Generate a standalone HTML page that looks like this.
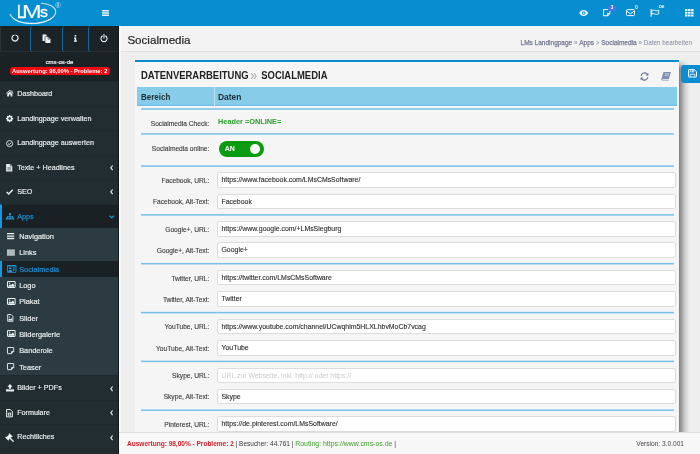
<!DOCTYPE html>
<html lang="de">
<head>
<meta charset="utf-8">
<title>LMs CMS - Socialmedia</title>
<style>
*{box-sizing:border-box;margin:0;padding:0}
html,body{width:700px;height:454px;overflow:hidden}
body{font-family:"Liberation Sans",sans-serif;background:#eeeeee;color:#333;position:relative;font-size:7.2px;line-height:1}
.abs{position:absolute}
svg{display:block;overflow:visible}
#top,#side,#chead,#box,#foot{will-change:transform}

/* ---------- top bar ---------- */
#top{position:absolute;left:0;top:0;width:700px;height:26px;background:#078ed1}
#logo{position:absolute;left:0;top:0;width:119px;height:26px}
#logo .lms{position:absolute;left:0;top:1.5px;font-size:19px;line-height:19px;color:#fff;white-space:nowrap;-webkit-text-stroke:.3px #fff}
#logo .lms span{position:absolute;top:0;transform-origin:0 0;display:block}
#logo .lms .cL{left:17.4px;transform:scaleX(.76);-webkit-text-stroke:.35px #fff}
#logo .lms .cM{left:21.9px;transform:scaleX(1.24);-webkit-text-stroke:.05px #fff}
#logo .lms .cs{left:39.6px;top:3.7px;font-size:14.2px;line-height:14.2px;transform:scaleX(1.12)}
#logo .reg{position:absolute;left:55.2px;top:1.5px;font-size:7.4px;line-height:8px;color:#c9e6f6}
#burger{position:absolute;left:102px;top:10px;width:7px;height:6px}
#burger i{display:block;height:1.5px;background:#e4f2fa;margin-bottom:.7px}
.tico{position:absolute;top:0;height:26px}

/* ---------- sidebar ---------- */
#side{position:absolute;left:0;top:26px;width:119px;height:428px;background:#222d32;overflow:hidden}
#quick{position:absolute;left:0;top:0;width:119px;height:26px;background:#1b2327;border-bottom:1px solid #253036}
#quick .q{position:absolute;top:0;height:25.5px;width:30px;border-left:1px solid #17679a;border-radius:3px}
#quick .q:first-child{border-left-color:#2a343a}
#quick svg{position:absolute}
#user{position:absolute;left:0;top:26px;width:119px;height:29px;background:#1a2226;text-align:center}
#user .dom{position:absolute;left:0;width:119px;top:8.4px;font-size:5.95px;color:#f4f6f7;-webkit-text-stroke:.18px}
#user .bad{position:absolute;left:10px;top:15px;width:99.5px;height:8.4px;border-radius:3px;background:#ee0a12;color:#fff;font-weight:bold;font-size:5.82px;line-height:8.4px;white-space:nowrap}
ul{list-style:none}
#menu{position:absolute;left:0;top:55px;width:119px}
#menu>li{position:relative;height:24.5px;border-top:1px solid #1e282d;color:#eef2f3;font-size:7.2px;line-height:24px;white-space:nowrap;-webkit-text-stroke:.15px}
#menu>li .t{position:absolute;left:17.2px;top:0}
#menu>li svg.ic{position:absolute;left:6px;top:8.6px}
#menu>li .chev{position:absolute;left:109.5px;top:9.3px}
#menu>li.act{background:#192125;border-left:2px solid #1b95dc;color:#1f93da}
#menu>li.act .t{left:15.2px}
#menu>li.act svg.ic{left:4px}
#menu>li.act .chev{left:107.5px}
#menu>li.sw{height:147.4px;border-top:0;line-height:1}
#sub{background:#2c3b41;height:147.4px}
#sub li{position:relative;height:16.32px;color:#eef2f3;font-size:7.35px;line-height:18px;white-space:nowrap;-webkit-text-stroke:.15px}
#sub li .t{position:absolute;left:19.2px;top:0}
#sub li svg{position:absolute;left:7px;top:4.8px}
#sub li.act{background:#192125;border-left:2px solid #1b95dc;color:#1f93da}
#sub li.act .t{left:17.2px}
#sub li.act svg{left:4.6px;top:4.4px}

/* ---------- content ---------- */
#chead{position:absolute;left:119px;top:26px;width:581px;height:26px;background:#f3f3f3;border-bottom:1px solid #e2e2e2}
#chead h1{position:absolute;left:8.4px;top:6.6px;font-size:11.6px;line-height:14px;font-weight:normal;color:#252525;white-space:nowrap;-webkit-text-stroke:.2px}
#crumb{position:absolute;right:8px;top:12.9px;font-size:6.3px;color:#82879f;white-space:nowrap;line-height:7px}
#crumb b{font-weight:normal;font-size:6.5px;-webkit-text-stroke:.25px;color:#767b95}
#box{position:absolute;left:135px;top:60px;width:544px;height:380px;background:#f5f5f5;border-top:2px solid #0b8dd1;}
#shadow{position:absolute;left:679px;top:60px;width:11px;height:372px;background:linear-gradient(90deg,rgba(0,0,0,.47) 0,rgba(0,0,0,.33) 22%,rgba(0,0,0,.17) 48%,rgba(0,0,0,.06) 75%,rgba(0,0,0,0) 100%);-webkit-mask-image:linear-gradient(180deg,rgba(0,0,0,0) 0,rgba(0,0,0,.4) 4px,#000 9px);mask-image:linear-gradient(180deg,rgba(0,0,0,0) 0,rgba(0,0,0,.4) 4px,#000 9px)}
#box h2{position:absolute;left:6.4px;top:7.4px;font-size:10.6px;line-height:12px;font-weight:bold;color:#222;white-space:nowrap;transform-origin:0 0;transform:scaleX(.893)}
#box h2 span{color:#a8a8a8;font-weight:normal;font-size:14px;line-height:10px;letter-spacing:-.6px;position:relative;top:.3px;margin-left:-1.2px;margin-right:2.3px}
#thead{position:absolute;left:2.4px;top:25px;width:540px;height:19px;background:#87cdea;box-shadow:inset 0 -1.6px 0 #72c2e7}
#thead div{position:absolute;top:0;height:19px;font-size:9.2px;line-height:20.2px;font-weight:bold;color:#1d2b33;white-space:nowrap}
#thead .c1{left:3.4px;transform-origin:0 0;transform:scaleX(.868)}
#thead .c2{left:80.8px;transform-origin:0 0;transform:scaleX(.917)}
#thead .sep{left:76.6px;width:1.2px;background:#bfe3f3}
.ln{position:absolute;left:6px;width:533px;height:2px;background:#86c7e7}
.lab{position:absolute;left:0;width:74.4px;text-align:right;font-size:6.65px;color:#3a3a3a;white-space:nowrap;line-height:8px;-webkit-text-stroke:.12px}
.inp{position:absolute;left:82.4px;width:458.2px;height:15.6px;background:#fff;border:1px solid #dcdcdc;border-radius:2.2px;font-size:6.93px;line-height:14.6px;padding-left:3.1px;color:#2f2f2f;-webkit-text-stroke:.12px;white-space:nowrap;overflow:hidden}
.inp.ph{color:#cbcbcb;-webkit-text-stroke:0}
#chk{position:absolute;left:83px;top:55.6px;font-size:7.35px;font-weight:bold;color:#2f9e2c;white-space:nowrap;line-height:8px}
#tog{position:absolute;left:83.8px;top:79.2px;width:45px;height:16px;border-radius:8px;background:#0b9b10}
#tog b{position:absolute;left:6px;top:0;line-height:16.4px;font-size:7px;color:#fff}
#tog i{position:absolute;left:31.7px;top:3.2px;width:9.6px;height:9.6px;border-radius:5px;background:#fff}
#save{position:absolute;left:681px;top:65px;width:19px;height:17.6px;background:#0b8dd1;border-radius:3px 0 0 3px}
#foot{position:absolute;left:119px;top:432px;width:581px;height:22px;background:#f7f7f7;border-top:1px solid #dfdfe2;font-size:6.76px;line-height:8px;white-space:nowrap}
#foot .l{position:absolute;left:8px;top:7.4px;color:#444}
#foot .l b{color:#d0242e;font-weight:bold;font-size:6.52px}
#foot .l .g{color:#3f9f2e;font-size:6.95px}
#foot .l .m{font-size:6.49px;color:#3c3c3c}
#foot .r{position:absolute;right:16px;top:7.4px;color:#444;font-size:6.6px}
</style>
</head>
<body>

<div id="top">
  <div id="logo">
    <svg class="abs" style="left:0;top:0" width="70" height="26" viewBox="0 0 70 26">
      <path d="M41.5 3.2 C51 4.2 56.4 8 55.6 12.6 C54.5 19.2 43 23.6 31 23.4 C21 23.2 13 19.6 10 14.4" fill="none" stroke="#e2f2fb" stroke-width="1.1" stroke-linecap="round" opacity=".9"/>
      <path d="M53.6 16.4 C50 21 41 23.9 31 23.7 C23 23.5 16 21 12.6 17.6" fill="none" stroke="#ffffff" stroke-width=".9" stroke-linecap="round" opacity=".7"/>
    </svg>
    <div class="lms"><span class="cL">L</span><span class="cM">M</span><span class="cs">s</span></div>
    <div class="reg">®</div>
  </div>
  <svg id="burger" width="7" height="6" viewBox="0 0 7 6"><path d="M0 0 H7 V1.45 H0 Z M0 2.25 H7 V3.7 H0 Z M0 4.5 H7 V5.95 H0 Z" fill="#e4f2fa"/></svg>

  <!-- eye -->
  <svg class="abs" style="left:579px;top:10px" width="9.4" height="6" viewBox="0 0 18 12">
    <path d="M0 6 C3 1.2 6 0 9 0 C12 0 15 1.2 18 6 C15 10.8 12 12 9 12 C6 12 3 10.8 0 6 Z" fill="#f2f9fd"/>
    <circle cx="9" cy="6" r="3.6" fill="#0b8dd1"/><circle cx="9" cy="6" r="1.7" fill="#f2f9fd"/>
  </svg>
  <!-- sticky note -->
  <svg class="abs" style="left:603px;top:9.2px" width="7.4" height="7.4" viewBox="0 0 14 14">
    <path d="M1.6 1 H12.4 Q13 1 13 1.6 V8.6 L8.6 13 H1.6 Q1 13 1 12.4 V1.6 Q1 1 1.6 1 Z M8.6 13 V9.2 Q8.6 8.6 9.2 8.6 H13" fill="none" stroke="#f2f9fd" stroke-width="1.9" stroke-linejoin="round"/>
  </svg>
  <div class="abs" style="left:608.4px;top:4.6px;width:7.2px;height:6.2px;border-radius:1.6px;background:#4673e6;color:#fff;font-size:4.6px;line-height:6.2px;text-align:center;font-weight:bold">3</div>
  <!-- mail -->
  <svg class="abs" style="left:625.6px;top:9.4px" width="9" height="7.2" viewBox="0 0 18 14">
    <rect x="1" y="1" width="16" height="12" rx="2" fill="none" stroke="#f2f9fd" stroke-width="2"/>
    <path d="M1.5 4 L9 9.4 L16.5 4" fill="none" stroke="#f2f9fd" stroke-width="2"/>
  </svg>
  <div class="abs" style="left:634.9px;top:4.9px;color:#eef7fc;font-size:5.2px;line-height:5px;font-weight:bold">0</div>
  <!-- flag -->
  <svg class="abs" style="left:649.6px;top:8.6px" width="9.4" height="8.2" viewBox="0 0 18 16">
    <path d="M2 1 V14" stroke="#f2f9fd" stroke-width="2.2" stroke-linecap="round" fill="none"/>
    <path d="M3.4 3 C6 1.6 8 2.2 10 3 C12.4 4 14.4 3.6 16.8 2.4 V9.4 C14.4 10.8 12.4 11 10 10 C8 9.2 6 8.8 3.4 10 Z" fill="none" stroke="#f2f9fd" stroke-width="1.9" stroke-linejoin="round"/>
  </svg>
  <div class="abs" style="left:658.8px;top:4.4px;color:#eef7fc;font-size:4.3px;line-height:5px;font-weight:bold;letter-spacing:-.35px">DE</div>
  <!-- grid -->
  <svg class="abs" style="left:685px;top:8.9px" width="8.6" height="7.5" viewBox="0 0 17 15">
    <g fill="#f6fbfe"><rect x="0" y="0" width="4.8" height="4"/><rect x="6.1" y="0" width="4.8" height="4"/><rect x="12.2" y="0" width="4.8" height="4"/>
    <rect x="0" y="5.5" width="4.8" height="4"/><rect x="6.1" y="5.5" width="4.8" height="4"/><rect x="12.2" y="5.5" width="4.8" height="4"/>
    <rect x="0" y="11" width="4.8" height="4"/><rect x="6.1" y="11" width="4.8" height="4"/><rect x="12.2" y="11" width="4.8" height="4"/></g>
  </svg>
</div>

<div id="side">
  <div id="quick">
    <div class="q" style="left:0">
      <svg style="left:10.4px;top:8.2px" width="8" height="8" viewBox="0 0 16 16"><path d="M7 2 A6.1 6.1 0 1 0 9 2" fill="none" stroke="#eef2f4" stroke-width="2.4" stroke-linecap="butt"/></svg>
    </div>
    <div class="q" style="left:30px">
      <svg style="left:11.4px;top:7.6px" width="9" height="9.4" viewBox="0 0 18 19"><path d="M1 1 H9 V5 H5.4 V14 H1 Z" fill="#eef2f4"/><path d="M6.6 5.6 H12 L17 10.6 V18 H6.6 Z" fill="#eef2f4"/><path d="M12.2 6.4 V10.4 H16.2" fill="none" stroke="#1a2226" stroke-width="1.2"/></svg>
    </div>
    <div class="q" style="left:61.6px;width:28px">
      <svg style="left:11.1px;top:8.6px" width="2.8" height="6.8" viewBox="0 0 7 17"><rect x="1.6" y="0" width="4" height="4" fill="#eef2f4"/><path d="M0 6 H5.6 V14 H7 V17 H0 V14 H1.6 V9 H0 Z" fill="#eef2f4"/></svg>
    </div>
    <div class="q" style="left:88.4px">
      <svg style="left:10.3px;top:7.8px" width="8" height="8.4" viewBox="0 0 16 17"><path d="M4.6 4 A6.2 6.2 0 1 0 11.4 4" fill="none" stroke="#eef2f4" stroke-width="2.2" stroke-linecap="round"/><path d="M8 1.2 V8" stroke="#eef2f4" stroke-width="2.2" stroke-linecap="round"/></svg>
    </div>
  </div>
  <div id="user">
    <div class="dom">cms-os-de</div>
    <div class="bad">Auswertung: 98,00% - Probleme: 2</div>
  </div>

  <ul id="menu">
    <li><svg class="ic" style="top:7.6px" width="7.6" height="6.6" viewBox="0 0 15 13"><path d="M7.5 0 L15 6.4 L14 7.6 L7.5 2.2 L1 7.6 L0 6.4 Z M2.4 7.6 L7.5 3.4 L12.6 7.6 V13 H9 V9 H6 V13 H2.4 Z M11 1 H13 V3.6 L11 2 Z" fill="#e9eef0"/></svg><span class="t">Dashboard</span></li>
    <li><svg class="ic" width="7.2" height="7.2" viewBox="0 0 16 16"><path d="M8 0 L9.4 0 L9.9 2.1 L11.4 2.8 L13.2 1.6 L14.4 2.8 L13.2 4.6 L13.9 6.1 L16 6.6 V9.4 L13.9 9.9 L13.2 11.4 L14.4 13.2 L13.2 14.4 L11.4 13.2 L9.9 13.9 L9.4 16 H6.6 L6.1 13.9 L4.6 13.2 L2.8 14.4 L1.6 13.2 L2.8 11.4 L2.1 9.9 L0 9.4 V6.6 L2.1 6.1 L2.8 4.6 L1.6 2.8 L2.8 1.6 L4.6 2.8 L6.1 2.1 L6.6 0 Z M8 5.2 A2.8 2.8 0 1 0 8 10.8 A2.8 2.8 0 1 0 8 5.2 Z" fill="#e9eef0" fill-rule="evenodd"/></svg><span class="t">Landingpage verwalten</span></li>
    <li><svg class="ic" width="7.2" height="7.2" viewBox="0 0 16 16"><circle cx="8" cy="8" r="6.8" fill="none" stroke="#e9eef0" stroke-width="2"/><path d="M4.6 8 L7.2 10.4 L11.6 5.6" fill="none" stroke="#e9eef0" stroke-width="2.2"/></svg><span class="t">Landingpage auswerten</span></li>
    <li><svg class="ic" style="left:6.4px;top:8.4px" width="6.4" height="7.6" viewBox="0 0 13 16"><path d="M0 0 H8 V5 H13 V16 H0 Z M9.2 0 L13 3.8 H9.2 Z" fill="#e9eef0"/><path d="M2.6 7.6 H10.4 M2.6 10 H10.4 M2.6 12.4 H10.4" stroke="#222d32" stroke-width="1"/></svg><span class="t">Texte + Headlines</span>
      <svg class="chev" width="3.4" height="5.6" viewBox="0 0 6.8 11.2"><path d="M5.2 1 L1.6 5.6 L5.2 10.2" fill="none" stroke="#e6ebed" stroke-width="2.3"/></svg></li>
    <li><svg class="ic" style="top:9.2px" width="7.4" height="5.8" viewBox="0 0 15 12"><path d="M1.2 6.4 L5.4 10.4 L13.8 1.6" fill="none" stroke="#e9eef0" stroke-width="3"/></svg><span class="t">SEO</span>
      <svg class="chev" width="3.4" height="5.6" viewBox="0 0 6.8 11.2"><path d="M5.2 1 L1.6 5.6 L5.2 10.2" fill="none" stroke="#e6ebed" stroke-width="2.3"/></svg></li>
    <li class="act"><svg class="ic" style="top:8.8px" width="8" height="6.6" viewBox="0 0 16 13"><path d="M6 0 H10 V4 H8.8 V6 H14 V9 H16 V13 H11 V9 H12.6 V7.4 H8.8 V9 H10.4 V13 H5.6 V9 H7.2 V7.4 H3.4 V9 H5 V13 H0 V9 H2 V6 H7.2 V4 H6 Z" fill="#1f93da"/></svg><span class="t">Apps</span>
      <svg class="chev" style="top:10.2px;left:107px" width="5.6" height="3.6" viewBox="0 0 11.2 7.2"><path d="M1 1.4 L5.6 5.4 L10.2 1.4" fill="none" stroke="#1f93da" stroke-width="2.7"/></svg></li>
    <li class="sw"><ul id="sub">
      <li><svg width="7.2" height="6.2" viewBox="0 0 14 12"><path d="M0 0 H14 V2.6 H0 Z M0 4.7 H14 V7.3 H0 Z M0 9.4 H14 V12 H0 Z" fill="#e9eef0"/></svg><span class="t">Navigation</span></li>
      <li><svg style="top:4.4px" width="7.8" height="7.2" viewBox="0 0 15 12"><rect width="15" height="12" fill="#c3cbcf"/><path d="M0 4 H15 M0 8 H15 M5 0 V12 M10 0 V12" stroke="#8b979c" stroke-width=".9"/></svg><span class="t">Links</span></li>
      <li class="act"><svg width="9.4" height="7.8" viewBox="0 0 16 13"><rect x="0" y="0" width="16" height="13" rx="1.6" fill="#1f93da"/><rect x="1.4" y="2.4" width="13.2" height="9.2" fill="#192125"/><circle cx="5.4" cy="5.6" r="2.1" fill="#1f93da"/><path d="M1.8 11.6 C1.8 7.4 9 7.4 9 11.6 Z" fill="#1f93da"/><path d="M9.8 4.8 H13.4 M9.8 7.2 H13.4 M9.8 9.6 H12.4" stroke="#1f93da" stroke-width="1.6"/></svg><span class="t">Socialmedia</span></li>
      <li><svg style="top:4.5px" width="8.6" height="7" viewBox="0 0 16 13"><rect x=".9" y=".9" width="14.2" height="11.2" rx="1.2" fill="none" stroke="#e9eef0" stroke-width="1.9"/><path d="M2.6 10.6 V8.8 L5.4 6 L7.4 8 L10.6 4.6 L13.4 7.6 V10.6 Z" fill="#e9eef0"/><circle cx="4.8" cy="4.2" r="1.3" fill="#e9eef0"/></svg><span class="t">Logo</span></li>
      <li><svg style="top:4.5px" width="8.6" height="7" viewBox="0 0 16 13"><rect x=".9" y=".9" width="14.2" height="11.2" rx="1.2" fill="none" stroke="#e9eef0" stroke-width="1.9"/><path d="M2.6 10.6 V8.8 L5.4 6 L7.4 8 L10.6 4.6 L13.4 7.6 V10.6 Z" fill="#e9eef0"/><circle cx="4.8" cy="4.2" r="1.3" fill="#e9eef0"/></svg><span class="t">Plakat</span></li>
      <li><svg style="top:4.1px;left:7.4px" width="6.6" height="7.8" viewBox="0 0 12 15"><path d="M1 1 H7.6 L11 4.4 V14 H1 Z" fill="none" stroke="#e9eef0" stroke-width="1.8" stroke-linejoin="round"/><path d="M2.6 12.4 V10.6 L4.6 8.6 L6 10 L7.8 8 L9.4 9.8 V12.4 Z" fill="#e9eef0"/><circle cx="4.2" cy="5.6" r="1.2" fill="#e9eef0"/></svg><span class="t">Slider</span></li>
      <li><svg style="top:4.5px" width="8.6" height="7" viewBox="0 0 16 13"><rect x=".9" y=".9" width="14.2" height="11.2" rx="1.2" fill="none" stroke="#e9eef0" stroke-width="1.9"/><path d="M2.6 10.6 V8.8 L5.4 6 L7.4 8 L10.6 4.6 L13.4 7.6 V10.6 Z" fill="#e9eef0"/><circle cx="4.8" cy="4.2" r="1.3" fill="#e9eef0"/></svg><span class="t">Bildergalerie</span></li>
      <li><svg style="top:4.6px" width="7.2" height="7.2" viewBox="0 0 14 14"><path d="M1.6 1 H12.4 Q13 1 13 1.6 V8.6 L8.6 13 H1.6 Q1 13 1 12.4 V1.6 Q1 1 1.6 1 Z M8.6 13 V9.2 Q8.6 8.6 9.2 8.6 H13" fill="none" stroke="#e9eef0" stroke-width="1.8" stroke-linejoin="round"/></svg><span class="t">Banderole</span></li>
      <li><svg style="top:4.6px" width="7.2" height="7.2" viewBox="0 0 14 14"><path d="M1.6 1 H12.4 Q13 1 13 1.6 V8.6 L8.6 13 H1.6 Q1 13 1 12.4 V1.6 Q1 1 1.6 1 Z M8.6 13 V9.2 Q8.6 8.6 9.2 8.6 H13" fill="none" stroke="#e9eef0" stroke-width="1.8" stroke-linejoin="round"/></svg><span class="t">Teaser</span></li>
    </ul></li>
    <li><svg class="ic" style="top:8px;left:5.8px" width="8" height="7.6" viewBox="0 0 15 14"><path d="M7.5 0 L12.4 5 H9.6 V9 H5.4 V5 H2.6 Z M0 9.6 H4.4 V10.4 H10.6 V9.6 H15 V14 H0 Z" fill="#e9eef0"/></svg><span class="t">Bilder + PDFs</span>
      <svg class="chev" width="3.4" height="5.6" viewBox="0 0 6.8 11.2"><path d="M5.2 1 L1.6 5.6 L5.2 10.2" fill="none" stroke="#e6ebed" stroke-width="2.3"/></svg></li>
    <li><svg class="ic" style="left:6px;top:8px" width="7" height="8.4" viewBox="0 0 13 16"><path d="M1 1 H8 L12 5 V15 H1 Z" fill="none" stroke="#eef2f3" stroke-width="1.9" stroke-linejoin="round"/><path d="M3.4 7 H9.6 V12.6 H3.4 Z" fill="#eef2f3"/><path d="M3.4 9.8 H9.6 M6.5 7 V12.6" stroke="#222d32" stroke-width=".8"/></svg><span class="t">Formulare</span>
      <svg class="chev" width="3.4" height="5.6" viewBox="0 0 6.8 11.2"><path d="M5.2 1 L1.6 5.6 L5.2 10.2" fill="none" stroke="#e6ebed" stroke-width="2.3"/></svg></li>
    <li><svg class="ic" style="top:8.2px;left:5.8px" width="8" height="8" viewBox="0 0 16 16"><g transform="rotate(-45 6 6)"><rect x="1.2" y="2.6" width="9.6" height="6.4" rx=".8" fill="#eef2f3"/><rect x="0" y="1" width="2.6" height="9.6" rx=".8" fill="#eef2f3"/><rect x="9.4" y="1" width="2.6" height="9.6" rx=".8" fill="#eef2f3"/></g><path d="M8.4 8.4 L14.4 14.4" stroke="#eef2f3" stroke-width="2.6" stroke-linecap="round"/></svg><span class="t">Rechtliches</span>
      <svg class="chev" width="3.4" height="5.6" viewBox="0 0 6.8 11.2"><path d="M5.2 1 L1.6 5.6 L5.2 10.2" fill="none" stroke="#e6ebed" stroke-width="2.3"/></svg></li>
    <li></li>
  </ul>
</div>

<div class="abs" style="left:118px;top:26px;width:1px;height:428px;background:#10171a"></div>
<div id="chead">
  <h1>Socialmedia</h1>
  <div id="crumb"><b>LMs Landingpage</b> » <b>Apps</b> &gt; <b>Socialmedia</b> » Daten bearbeiten</div>
</div>

<div id="box">
  <h2>DATENVERARBEITUNG <span>»</span> SOCIALMEDIA</h2>
  <!-- refresh -->
  <svg class="abs" style="left:504.6px;top:9.6px" width="9" height="9" viewBox="0 0 18 18">
    <path d="M2.2 8 A7 7 0 0 1 14.6 4.4" fill="none" stroke="#656e88" stroke-width="2.1"/><path d="M16.8 1.6 V7.2 H11.2 Z" fill="#656e88"/>
    <path d="M15.8 10 A7 7 0 0 1 3.4 13.6" fill="none" stroke="#656e88" stroke-width="2.1"/><path d="M1.2 16.4 V10.8 H6.8 Z" fill="#656e88"/>
  </svg>
  <!-- book -->
  <svg class="abs" style="left:525.6px;top:9.8px" width="10" height="8.6" viewBox="0 0 20 17">
    <path d="M6 0 H19 Q20 0 19.7 1 L16 13 Q15.7 14 14.7 14 H3 Q2.4 14.8 3 15.4 H15 L15.6 17 H2.4 Q0 16.4 .6 14 L4.4 1.4 Q4.8 0 6 0 Z" fill="#8390b4"/>
    <path d="M8 3.6 H16.4 M7.2 6.4 H15.6" stroke="#f5f5f5" stroke-width="1.1"/>
  </svg>

    <svg class="abs" style="left:0;top:0" width="544" height="372" viewBox="0 0 544 372"><g fill="#76c0e4"><rect x="6" y="46.25" width="533" height="1.5"/><rect x="6" y="71.15" width="533" height="1.5"/><rect x="6" y="103.35" width="533" height="1.5"/><rect x="6" y="152.15" width="533" height="1.5"/><rect x="6" y="200.95" width="533" height="1.5"/><rect x="6" y="249.85" width="533" height="1.5"/><rect x="6" y="298.65" width="533" height="1.5"/><rect x="6" y="347.45" width="533" height="1.5"/></g></svg>
  <div id="thead"><div class="c1">Bereich</div><div class="sep"></div><div class="c2">Daten</div></div>
  <div class="lab" style="top:57.6px">Socialmedia Check:</div>
  <div id="chk">Header =ONLINE=</div>
  <div class="lab" style="top:82.6px">Socialmedia online:</div>
  <div id="tog"><b>AN</b><i></i></div>
  <div class="lab" style="top:114.9px">Facebook, URL:</div>
  <div class="inp" style="top:110.3px">https://www.facebook.com/LMsCMsSoftware/</div>
  <div class="lab" style="top:136.1px">Facebook, Alt-Text:</div>
  <div class="inp" style="top:131.5px">Facebook</div>
  <div class="lab" style="top:163.7px">Google+, URL:</div>
  <div class="inp" style="top:159.1px">https://www.google.com/+LMsSiegburg</div>
  <div class="lab" style="top:184.9px">Google+, Alt-Text:</div>
  <div class="inp" style="top:180.3px">Google+</div>
  <div class="lab" style="top:212.5px">Twitter, URL:</div>
  <div class="inp" style="top:207.9px">https://twitter.com/LMsCMsSoftware</div>
  <div class="lab" style="top:233.7px">Twitter, Alt-Text:</div>
  <div class="inp" style="top:229.1px">Twitter</div>
  <div class="lab" style="top:261.4px">YouTube, URL:</div>
  <div class="inp" style="top:256.8px">https://www.youtube.com/channel/UCwqhim5HLXLhbvMoCb7vcag</div>
  <div class="lab" style="top:282.6px">YouTube, Alt-Text:</div>
  <div class="inp" style="top:278px">YouTube</div>
  <div class="lab" style="top:310.2px">Skype, URL:</div>
  <div class="inp ph" style="top:305.6px">URL zur Webseite, inkl. http:// oder https://</div>
  <div class="lab" style="top:331.4px">Skype, Alt-Text:</div>
  <div class="inp" style="top:326.8px">Skype</div>
  <div class="lab" style="top:359.0px">Pinterest, URL:</div>
  <div class="inp" style="top:354.4px">https://de.pinterest.com/LMsSoftware/</div>
</div>

<div id="shadow"></div>
<div id="save">
  <svg class="abs" style="left:6.5px;top:4.2px" width="9" height="8.6" viewBox="0 0 18 17">
    <path d="M2 1 H12.6 L17 5.2 V15 Q17 16 16 16 H2 Q1 16 1 15 V2 Q1 1 2 1 Z" fill="none" stroke="#f4fafd" stroke-width="2"/>
    <path d="M4.6 1.4 V5.6 H11.4 V1.4" fill="none" stroke="#f4fafd" stroke-width="1.7"/>
    <path d="M4.4 15.6 V10.4 H13.6 V15.6" fill="none" stroke="#f4fafd" stroke-width="1.7"/>
    <rect x="8.6" y="2" width="1.8" height="2.6" fill="#f4fafd"/>
  </svg>
</div>

<div class="abs" style="left:119px;top:26px;width:2.4px;height:406px;background:linear-gradient(90deg,#ffffff 0,#fdfdfd 55%,rgba(248,248,248,0) 100%)"></div>
<div id="foot">
  <div class="l"><b>Auswertung: 98,00% - Probleme: 2</b><span class="m"> | Besucher: 44.761 | </span><span class="g">Routing: https://www.cms-os.de</span> |</div>
  <div class="r">Version: 3.0.001</div>
</div>

</body>
</html>
